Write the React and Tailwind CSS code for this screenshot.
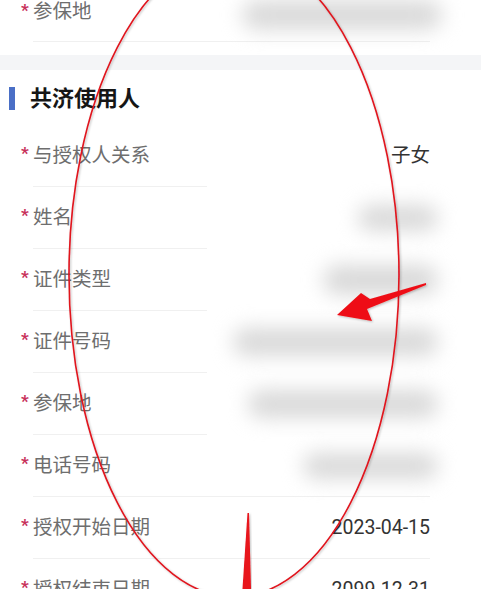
const rows = [
    { label: '与授权人关系', value: '子女', short: true },
    { label: '姓名', blur: 'w-[80px] h-[26px]', short: true },
    { label: '证件类型', blur: 'w-[115px] h-[30px]', short: true },
    { label: '证件号码', blur: 'w-[205px] h-[28px]', short: true },
    { label: '参保地', blur: 'w-[190px] h-[28px]', short: true },
    { label: '电话号码', blur: 'w-[135px] h-[26px]' },
    { label: '授权开始日期', value: '2023-04-15' },
    { label: '授权结束日期', value: '2099-12-31' },
];

function Label({ text }) {
    return (
        <span className="flex items-center leading-[24px] text-[19.5px] text-[#6e6e6e]">
            <span className="-ml-[12px] w-[12px] text-[17px] font-bold leading-none text-[#c7315a] -translate-y-[2px]">*</span>
            {text}
        </span>
    );
}

function Row({ row }) {
    return (
        <div className="h-[62px] ml-[33px] mr-[51px] flex flex-col">
            <div className="flex-1 flex items-center justify-between">
                <Label text={row.label} />
                {row.value && (
                    <span className="text-[19.5px] text-[#333]">{row.value}</span>
                )}
                {row.blur && (
                    <div className={`${row.blur} -mr-[8px] rounded-full bg-[#d9d9d9] blur-[10px]`} />
                )}
            </div>
            <div className={`h-px bg-[#f0f0f0] ${row.short ? 'w-[174px]' : 'w-full'}`} />
        </div>
    );
}

export default function App() {
    return (
        <div
            className="relative w-[481px] h-[589px] overflow-hidden bg-white"
            style={{ fontFamily: 'Roboto, "Noto Sans CJK SC", sans-serif' }}
        >
            {/* previous section tail */}
            <div className="h-[42px] ml-[33px] mr-[51px] flex flex-col">
                <div className="flex-1 flex items-start justify-between">
                    <Label text="参保地" />
                    <div className="w-[200px] h-[30px] -mr-[12px] rounded-full bg-[#dadada] blur-[10px]" />
                </div>
                <div className="h-px bg-[#f0f0f0] w-full" />
            </div>
            <div className="h-[13px]" />
            <div className="h-[15px] bg-[#f4f5f7]" />

            {/* section header */}
            <div className="h-[55px] flex items-start pt-[17px] pl-[9px]">
                <div className="w-[6px] h-[23px] bg-[#4a6fc6]" />
                <h2 className="ml-[15px] leading-[23px] text-[22px] font-bold text-[#161616]">共济使用人</h2>
            </div>

            {rows.map((row) => (
                <Row key={row.label} row={row} />
            ))}

            {/* annotation overlay */}
            <svg className="absolute inset-0 pointer-events-none" width="481" height="589" viewBox="0 0 481 589">
                <defs>
                    <filter id="sh" x="-10%" y="-10%" width="120%" height="120%">
                        <feDropShadow dx="1" dy="1" stdDeviation="0.8" floodColor="#000" floodOpacity="0.25" />
                    </filter>
                </defs>
                <ellipse cx="234" cy="275" rx="165" ry="322" fill="none" stroke="#e0141e" strokeWidth="1.6" filter="url(#sh)" />
                <polygon
                    points="426,283 370,299 361,293 337,315 372,321 367,309 426,285"
                    fill="#ee0f14"
                    filter="url(#sh)"
                />
                <polygon points="247.5,513 242.5,589 251,589 249,513" fill="#e8121a" filter="url(#sh)" />
            </svg>
        </div>
    );
}
